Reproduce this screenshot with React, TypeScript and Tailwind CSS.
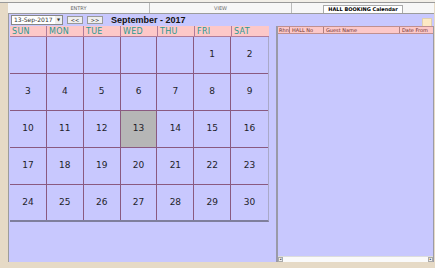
import React from "react";

const days = ["SUN", "MON", "TUE", "WED", "THU", "FRI", "SAT"];
const weeks: (number | null)[][] = [
  [null, null, null, null, null, 1, 2],
  [3, 4, 5, 6, 7, 8, 9],
  [10, 11, 12, 13, 14, 15, 16],
  [17, 18, 19, 20, 21, 22, 23],
  [24, 25, 26, 27, 28, 29, 30],
];

export default function App() {
  return (
    <div
      className="w-[435px] h-[268px] bg-[#e6dac6] flex flex-col overflow-hidden"
      style={{ fontFamily: '"DejaVu Sans", Verdana, sans-serif' }}
    >
      {/* top line */}
      <div className="h-[3px] bg-[#f2efe8] border-b border-[#9a9a9a]" />
      {/* tabs */}
      <div className="h-[10px] ml-[8px] mr-[1px] bg-[#f7f7f7] flex items-stretch text-[5px] text-[#666] leading-none">
        <div className="w-[142px] flex items-center justify-center border-r border-[#bbb]">ENTRY</div>
        <div className="w-[142px] flex items-center justify-center border-r border-[#bbb]">VIEW</div>
        <div className="flex-1 flex items-end justify-center">
          <div className="w-[80px] h-[8px] bg-white border border-[#aaa] border-b-0 flex items-center justify-center font-bold text-[5px] text-black">
            HALL BOOKING Calendar
          </div>
        </div>
      </div>
      {/* main */}
      <div className="flex-1 ml-[8px] mr-[1px] bg-[#c8c8fe] border-l border-t border-[#9c9c9c] flex flex-col">
        {/* controls */}
        <div className="h-[12px] flex items-center pl-[2px] pr-[2px]">
          <div className="w-[52px] h-[10px] bg-white border border-[#888] flex items-center text-[6px] text-[#333] leading-none pl-[2px]">
            <span className="flex-1">13-Sep-2017</span>
            <span className="w-[7px] h-full flex items-center justify-center text-[4px] bg-[#eee]">▼</span>
          </div>
          <div className="ml-[4px] w-[16px] h-[8px] bg-[#eeeeee] border border-[#999] text-[5px] leading-none flex items-center justify-center text-[#333]">&lt;&lt;</div>
          <div className="ml-[4px] w-[16px] h-[8px] bg-[#eeeeee] border border-[#999] text-[5px] leading-none flex items-center justify-center text-[#333]">&gt;&gt;</div>
          <div className="ml-[8px] text-[9px] font-bold text-[#111] leading-none" style={{ fontFamily: '"Liberation Sans", Arial, sans-serif' }}>
            September - 2017
          </div>
          <div className="flex-1" />
          <div className="w-[10px] h-[10px] bg-[#fde9c4] border border-[#e0d0b0] mt-[5px]" />
        </div>
        <div className="flex-1 flex">
          {/* calendar */}
          <div className="w-[259px] ml-[1px] flex flex-col">
            <div className="grid grid-cols-7 h-[11px] bg-[#fdc8c8]">
              {days.map((d, i) => (
                <div
                  key={d}
                  className={`text-[8px] leading-none text-[#2c9a90] pl-[2px] pt-[2px] tracking-[0.3px] border-b border-[#b07c9a] ${i < 6 ? "border-r border-[#8a5a80]" : ""}`}
                >
                  {d}
                </div>
              ))}
            </div>
            <div className="border-b-2 border-[#7f7f9c] border-r border-r-[#a9a9c8]">
              {weeks.map((w, wi) => (
                <div key={wi} className={`grid grid-cols-7 ${wi < 4 ? "h-[37px] border-b border-[#8a5a80]" : "h-[35px]"}`}>
                  {w.map((n, di) => (
                    <div
                      key={di}
                      className={`flex items-center justify-center text-[9px] text-[#1e1e2a] ${di < 6 ? "border-r border-[#8a5a80]" : ""} ${n === 13 ? "bg-[#b6b6b6]" : ""}`}
                    >
                      {n ?? ""}
                    </div>
                  ))}
                </div>
              ))}
            </div>
          </div>
          {/* right panel */}
          <div className="ml-[7px] flex-1 border-l-2 border-r border-[#9a9aa8] flex flex-col">
            <div className="h-[8px] flex bg-[#fdc8c8] text-[5px] leading-none text-[#6a3030] border-b border-t border-[#c09090]">
              <div className="w-[12px] border-r border-[#b08080] pl-[1px] flex items-center">Rhn</div>
              <div className="w-[34px] border-r border-[#b08080] pl-[2px] flex items-center">HALL No</div>
              <div className="w-[76px] border-r border-[#b08080] pl-[2px] flex items-center">Guest Name</div>
              <div className="flex-1 pl-[2px] flex items-center">Date From</div>
            </div>
            <div className="flex-1" />
            <div className="h-[6px] bg-[#fafafa] flex items-center justify-between border-t border-[#ddd]">
              <div className="w-[5px] h-[5px] border border-[#aaa] bg-[#eee] text-[3px] leading-none flex items-center justify-center">◂</div>
              <div className="w-[5px] h-[5px] border border-[#aaa] bg-[#eee] text-[3px] leading-none flex items-center justify-center">▸</div>
            </div>
          </div>
        </div>
      </div>
      <div className="h-[6px]" />
    </div>
  );
}
